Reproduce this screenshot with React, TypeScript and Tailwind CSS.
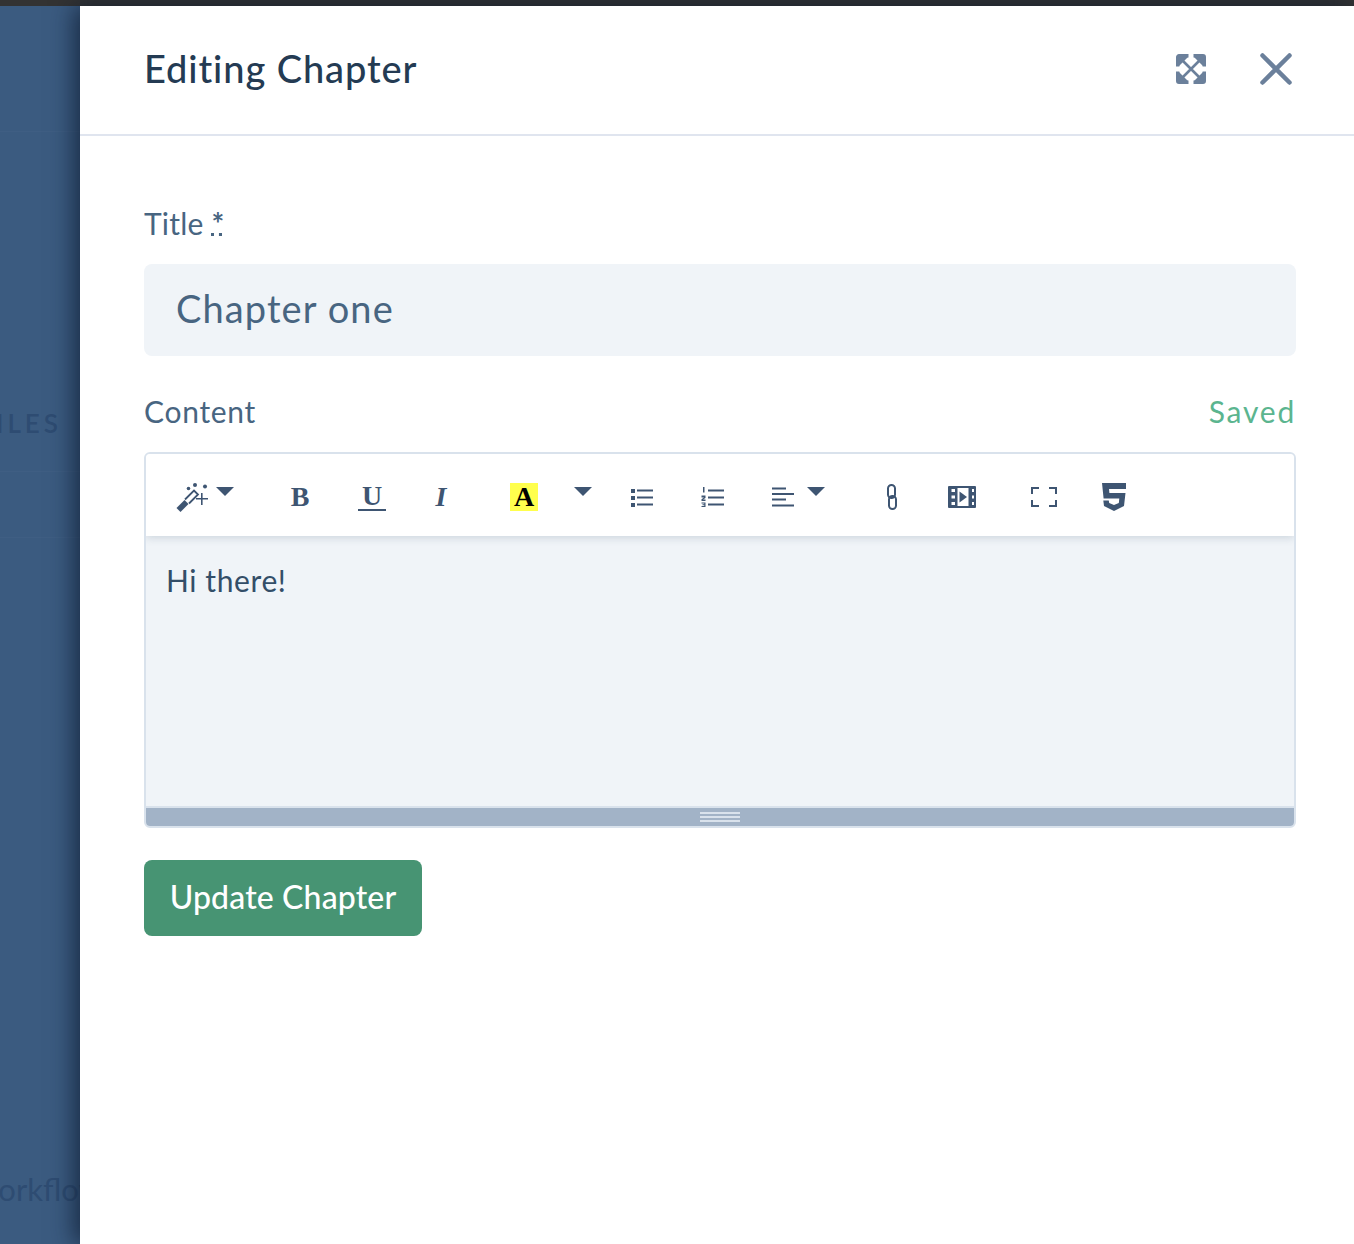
const Caret = () => (
    <svg width="18" height="9" viewBox="0 0 18 9" className="fill-[#3e5572]">
        <path d="M0 0h18L9 9z" />
    </svg>
);

const WandIcon = () => (
    <svg width="32" height="30" viewBox="0 0 32 30" className="fill-[#3e5572]">
        <path d="M0.500 26l8-8 4 4-8 8z" />
        <path d="M9 17.500 18 8.500l4 4-9 9" fill="none" stroke="#3e5572" strokeWidth="1.800" />
        <circle cx="12.500" cy="6.500" r="1.800" />
        <circle cx="19" cy="3" r="2" />
        <circle cx="29" cy="4.500" r="2" />
        <path d="M25 11h1.600v5H32v1.600h-5.400V23H25v-5.400h-5V16h5z" />
    </svg>
);

const UlIcon = () => (
    <svg width="24" height="20" viewBox="0 0 24 20" className="fill-[#3e5572]">
        <path d="M0 2h4v4H0zM0 9h4v4H0zM0 16h4v4H0z" />
        <path d="M6 2.500h16v2H6zM6 9.500h16v2H6zM6 16.500h16v2H6z" />
    </svg>
);

const OlIcon = () => (
    <svg width="24" height="20" viewBox="0 0 24 20" className="fill-[#3e5572]">
        <path d="M2 0h1.500v5.500H2zM.5 8.500h4V11l-2.500 1.500h2.500V14H.5v-1.800L3 10.500H.5zM.5 15.500h4V20h-4v-1h2.800v-.7H1.500v-1h1.800v-.8H.5z" />
        <path d="M7 2.500h16v2H7zM7 9.500h16v2H7zM7 16.500h16v2H7z" />
    </svg>
);

const AlignIcon = () => (
    <svg width="24" height="20" viewBox="0 0 24 20" className="fill-[#3e5572]">
        <path d="M1 0.500h14v2H1zM1 6h22v2H1zM1 11.500h14v2H1zM1 17.500h22v2H1z" />
    </svg>
);

const LinkIcon = () => (
    <svg width="10" height="26" viewBox="0 0 10 26" fill="none" className="stroke-[#3e5572]" strokeWidth="2">
        <rect x="1" y="1" width="7" height="13" rx="3.500" />
        <rect x="2" y="12" width="7" height="13" rx="3.500" />
    </svg>
);

const VideoIcon = () => (
    <svg width="28" height="22" viewBox="0 0 28 22">
        <rect width="28" height="22" rx="1" fill="#3e5572" />
        <path d="M3.500 3h3.500v3H3.500zM3.500 9.500h3.500v3H3.500zM3.500 16h3.500v3H3.500zM24 3h2v3h-2zM24 9.500h2v3h-2zM24 16h2v3h-2z" fill="#fff" />
        <path d="M9.500 2h11v18h-11z" fill="#fff" />
        <path d="M11.500 5.500l7.500 5.500-7.500 5.500z" fill="#3e5572" />
    </svg>
);

const FullscreenIcon = () => (
    <svg width="26" height="20" viewBox="0 0 26 20" fill="none" className="stroke-[#3e5572]" strokeWidth="2">
        <path d="M8 1H1v6M18 1h7v6M8 19H1v-6M18 19h7v-6" />
    </svg>
);

const Html5Icon = () => (
    <svg width="24" height="28" viewBox="0 0 24 28" className="fill-[#3e5572]">
        <path d="M0 0h24v6H7l.4 4H23.500L22 23l-10 5-10-5-.7-5.500h5.500l.4 2.500 4.800 2 4.800-2 .5-4.500H1.600z" />
    </svg>
);

const ExpandIcon = () => (
    <svg width="30" height="30" viewBox="0 0 30 30" fill="none" stroke="#6b809b">
        <path d="M12.500 1.700H3A1.300 1.300 0 0 0 1.700 3v9.500M17.500 1.700H27A1.300 1.300 0 0 1 28.300 3v9.500M12.500 28.300H3A1.300 1.300 0 0 1 1.700 27v-9.500M17.500 28.300H27a1.300 1.300 0 0 0 1.300-1.300v-9.500" strokeWidth="3.400" />
        <path d="M6 6l18 18M24 6 6 24" strokeWidth="2.600" />
        <path d="M3 3h9l-9 9zM27 3h-9l9 9zM3 27h9l-9-9zM27 27h-9l9-9z" fill="#6b809b" strokeWidth="0" />
    </svg>
);

const CloseIcon = () => (
    <svg width="32" height="32" viewBox="0 0 32 32" fill="none" className="stroke-[#6b809b]" strokeWidth="4.500" strokeLinecap="round">
        <path d="M2.500 2.500l27 27M29.500 2.500l-27 27" />
    </svg>
);

const serif = "font-['Liberation_Serif',serif] font-bold text-[28px] leading-none";

export default function App() {
    return (
        <div className="h-[1244px] overflow-hidden bg-white font-['Lato',sans-serif]">
            <div className="h-[6px] bg-[#333333]" />

            <div className="flex h-[1238px]">
                {/* page behind the drawer */}
                <aside className="w-[80px] shrink-0 overflow-hidden bg-[#3b5b80] text-[#2e4c72]">
                    <div className="h-[126px] border-b border-[#3f5e83]" />
                    <div className="flex h-[340px] items-end justify-end border-b border-[#3f5e83] pb-[35px]">
                        <span className="mr-[18px] whitespace-nowrap text-[26px] font-semibold leading-none tracking-[4px]">FILES</span>
                    </div>
                    <div className="h-[66px] border-b border-[#3f5e83]" />
                    <p className="mt-[631px] -ml-[32px] whitespace-nowrap text-[31px] leading-[40px]">Workflow</p>
                </aside>

                <main className="relative z-10 min-w-0 flex-1 bg-white shadow-[-6px_0_22px_rgba(12,24,44,0.7)]">
                    <header className="flex h-[130px] items-center justify-between border-b-2 border-[#e0e5ef] pl-[64px] pr-[62px]">
                        <h1 className="pb-[4px] text-[38px] font-medium leading-none tracking-[0.9px] text-[#243b53]">Editing Chapter</h1>
                        <div className="flex items-center gap-[54px] pb-[2px]">
                            <ExpandIcon />
                            <CloseIcon />
                        </div>
                    </header>

                    <form className="pl-[64px] pr-[58px]">
                        <label className="mt-[69px] block text-[30px] leading-[36px] tracking-[0.2px] text-[#486581]">
                            Title{" "}
                            <span className="inline-block w-[11px] border-b-[3px] border-dotted border-[#486581] text-center font-bold leading-[20px]">*</span>
                        </label>
                        <input
                            readOnly
                            value="Chapter one"
                            className="mt-[23px] block h-[92px] w-full rounded-lg bg-[#f0f4f8] px-[32px] pb-[4px] text-[38px] tracking-[1.1px] text-[#486581] outline-none font-['Lato',sans-serif]"
                        />

                        <div className="mt-[37px] flex items-center justify-between text-[30px] leading-[36px]">
                            <label className="tracking-[0.7px] text-[#486581]">Content</label>
                            <span className="tracking-[1.8px] text-[#5bb58f]">Saved</span>
                        </div>

                        <div className="mt-[23px] h-[376px] overflow-hidden rounded-md border-2 border-[#d9e2ec]">
                            <div className="relative flex h-[82px] items-center bg-white pl-[24px] pt-[4px] shadow-[0_2px_8px_rgba(51,78,104,0.18)]">
                                <button type="button" className="flex h-[40px] w-[70px] items-center justify-center gap-[8px]">
                                    <WandIcon />
                                    <span className="-mt-[12px]"><Caret /></span>
                                </button>
                                <button type="button" className={`ml-[40px] h-[40px] w-[40px] text-[#3e5572] ${serif}`}>B</button>
                                <button type="button" className={`ml-[32px] flex h-[40px] w-[40px] flex-col items-center justify-center pt-[1px] text-[#3e5572] ${serif}`}>
                                    <span className="leading-[24px]">U</span>
                                    <span className="mt-[1px] h-[2px] w-[28px] bg-[#3e5572]" />
                                </button>
                                <button type="button" className={`ml-[29px] h-[40px] w-[40px] italic text-[#3e5572] ${serif}`}>I</button>
                                <button type="button" className="ml-[43px] flex h-[40px] w-[40px] items-center justify-center">
                                    <span className={`flex h-[28px] w-[28px] items-center justify-center bg-[#ffff4d] text-black ${serif}`}>A</span>
                                </button>
                                <button type="button" className="ml-[19px] flex h-[40px] w-[40px] items-center justify-center pb-[12px]"><Caret /></button>
                                <button type="button" className="ml-[20px] flex h-[40px] w-[40px] items-center justify-center"><UlIcon /></button>
                                <button type="button" className="ml-[30px] flex h-[40px] w-[40px] items-center justify-center"><OlIcon /></button>
                                <button type="button" className="ml-[30px] flex h-[40px] w-[70px] items-center justify-center gap-[12px]">
                                    <AlignIcon />
                                    <span className="-mt-[12px]"><Caret /></span>
                                </button>
                                <button type="button" className="ml-[39px] flex h-[40px] w-[40px] items-center justify-center"><LinkIcon /></button>
                                <button type="button" className="ml-[30px] flex h-[40px] w-[40px] items-center justify-center"><VideoIcon /></button>
                                <button type="button" className="ml-[42px] flex h-[40px] w-[40px] items-center justify-center"><FullscreenIcon /></button>
                                <button type="button" className="ml-[30px] flex h-[40px] w-[40px] items-center justify-center"><Html5Icon /></button>
                            </div>

                            <div className="h-[270px] bg-[#f0f4f8] px-[20px] pt-[24px] text-[30px] leading-[40px] tracking-[0.6px] text-[#334e68]">Hi there!</div>

                            <div className="flex h-[20px] flex-col items-center justify-center gap-[2px] border-t-2 border-[#d9e2ec] bg-[#a2b3c7]">
                                <span className="h-[2px] w-[40px] bg-[#d9e2ec]" />
                                <span className="h-[2px] w-[40px] bg-[#d9e2ec]" />
                                <span className="h-[2px] w-[40px] bg-[#d9e2ec]" />
                            </div>
                        </div>

                        <button type="button" className="mt-[32px] h-[76px] w-[278px] rounded-lg bg-[#479473] pb-[2px] text-[32px] font-medium tracking-[0.15px] text-white">
                            Update Chapter
                        </button>
                    </form>
                </main>
            </div>
        </div>
    );
}
